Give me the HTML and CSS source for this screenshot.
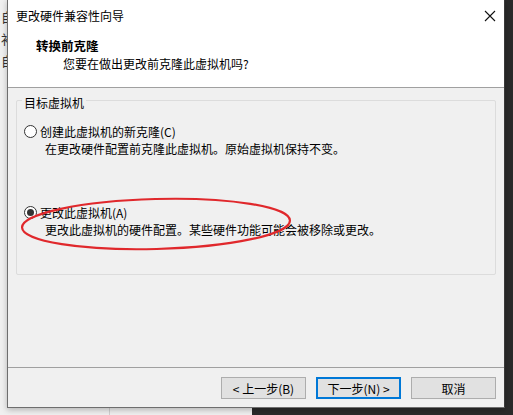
FILE: index.html
```html
<!DOCTYPE html>
<html lang="zh-CN">
<head>
<meta charset="utf-8">
<link rel="stylesheet" href="styles.css">
</head>
<body>
<div class="backwin">
  <div class="backcol">
    <span>自</span>
    <span>补</span>
    <span>自</span>
  </div>
</div>
<div class="dialog">
  <div class="titlebar">
    <span class="title">更改硬件兼容性向导</span>
    <svg class="close" width="12" height="12" viewBox="0 0 12 12"><path d="M1 1L11 11M11 1L1 11" stroke="#111" stroke-width="1.1" fill="none"/></svg>
  </div>
  <div class="header">
    <div class="h-title">转换前克隆</div>
    <div class="h-sub">您要在做出更改前克隆此虚拟机吗?</div>
  </div>
  <div class="body">
    <div class="group">
      <span class="legend">目标虚拟机</span>
      <div class="opt opt1">
        <div class="opt-row"><span class="radio"></span><span>创建此虚拟机的新克隆(C)</span></div>
        <div class="opt-desc">在更改硬件配置前克隆此虚拟机。原始虚拟机保持不变。</div>
      </div>
      <div class="opt opt2">
        <div class="opt-row"><span class="radio on"></span><span>更改此虚拟机(A)</span></div>
        <div class="opt-desc">更改此虚拟机的硬件配置。某些硬件功能可能会被移除或更改。</div>
      </div>
    </div>
    <svg class="mark" width="290" height="70" viewBox="0 0 290 70"><ellipse cx="145" cy="34" rx="134" ry="25" transform="rotate(-1.5 145 34)" fill="none" stroke="#e0282c" stroke-width="2.2"/></svg>
  </div>
  <div class="footer">
    <button class="btn">&lt; 上一步(B)</button>
    <button class="btn primary">下一步(N) &gt;</button>
    <button class="btn cancel">取消</button>
  </div>
</div>
</body>
</html>
```
FILE: styles.css
```css
html, body {
  margin: 0;
  padding: 0;
}
body {
  width: 513px;
  height: 415px;
  background: #2a2a2a;
  position: relative;
  overflow: hidden;
  font-family: "Microsoft YaHei", "Noto Sans CJK SC", sans-serif;
  font-size: 12px;
  color: #000;
}
.backwin {
  position: absolute;
  left: 0;
  top: 0;
  width: 252px;
  height: 415px;
  background: #f0f0f0;
}
.backcol {
  width: 110px;
  height: 415px;
  border-right: 1px solid #d0d0d0;
  display: flex;
  flex-direction: column;
  padding-left: 1px;
  padding-top: 8px;
  box-sizing: border-box;
  gap: 4px;
  font-size: 13px;
  line-height: 18px;
  color: #333;
}
.dialog {
  position: absolute;
  left: 7px;
  top: -1px;
  width: 498px;
  height: 409px;
  box-sizing: border-box;
  border: 1px solid #6e6e6e;
  border-right-color: #3a3a3a;
  background: #f0f0f0;
  box-shadow: 0 2px 6px rgba(0,0,0,0.25);
  display: flex;
  flex-direction: column;
}
.titlebar {
  height: 31px;
  background: #fff;
  display: flex;
  align-items: center;
  justify-content: space-between;
  padding: 0 8px 0 8px;
}
.title {
  font-size: 12px;
}
.header {
  background: #fff;
  height: 56px;
  border-bottom: 1px solid #a0a0a0;
  padding-left: 28px;
  display: flex;
  flex-direction: column;
}
.h-title {
  font-weight: bold;
  font-size: 12.5px;
  line-height: 18px;
  margin-top: 6px;
}
.h-sub {
  padding-left: 27px;
  line-height: 18px;
}
.body {
  position: relative;
  height: 267px;
  border-bottom: 1px solid #a0a0a0;
  padding: 12px 8px 0 8px;
}
.group {
  border: 1px solid #dcdcdc;
  border-radius: 2px;
  height: 175px;
  box-sizing: border-box;
  padding: 0 7px;
  display: flex;
  flex-direction: column;
  align-items: flex-start;
}
.legend {
  margin-top: -5px;
  margin-left: -2px;
  padding: 0 2px;
  line-height: 14px;
  background: #f0f0f0;
}
.opt {
  display: flex;
  flex-direction: column;
}
.opt1 {
  margin-top: 12px;
}
.opt2 {
  margin-top: 45px;
}
.opt-row {
  display: flex;
  align-items: center;
  gap: 3px;
  height: 18px;
}
.opt-desc {
  padding-left: 21px;
  line-height: 18px;
}
.radio {
  width: 11px;
  height: 11px;
  border: 1px solid #333;
  border-radius: 50%;
  background: #fff;
  display: inline-flex;
  align-items: center;
  justify-content: center;
}
.radio.on::after {
  content: "";
  width: 7px;
  height: 7px;
  border-radius: 50%;
  background: #333;
}
.mark {
  position: absolute;
  left: 3px;
  top: 102px;
}
.footer {
  flex: 1;
  display: flex;
  justify-content: flex-end;
  align-items: flex-start;
  gap: 10px;
  padding: 9px 8px 0 0;
}
.btn {
  width: 85px;
  height: 22px;
  font-family: inherit;
  font-size: 12px;
  background: #e1e1e1;
  border: 1px solid #adadad;
  padding: 0;
  color: #000;
}
.btn.primary {
  border: 2px solid #0078d7;
}
```
